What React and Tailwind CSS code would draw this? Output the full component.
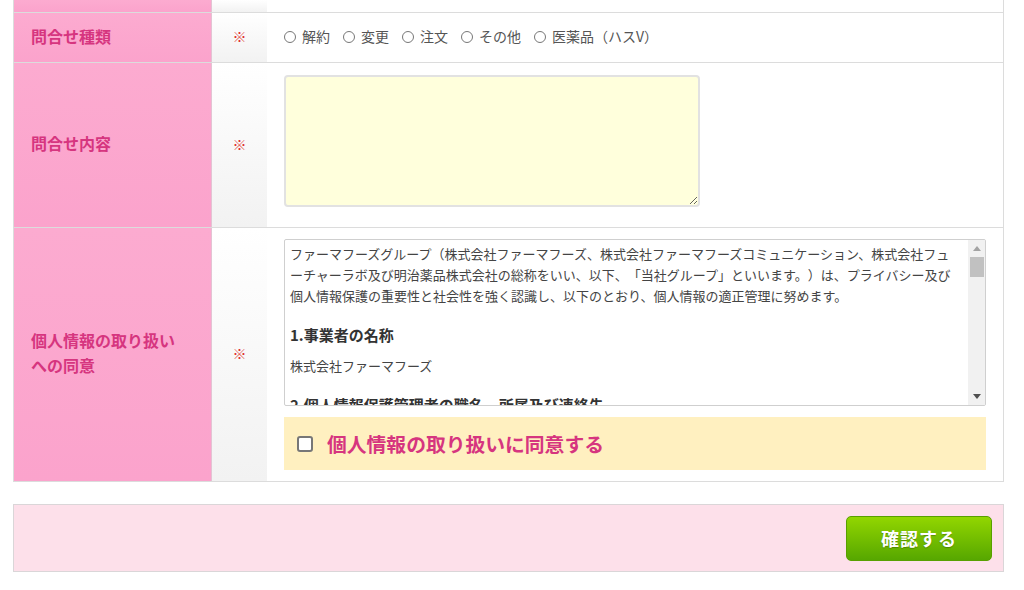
import React from 'react';

const font = { fontFamily: '"Noto Sans CJK JP", "Noto Sans", sans-serif' };

const kinds = ['解約', '変更', '注文', 'その他', '医薬品（ハスV）'];

const Row = ({ label, height, children, align = 'items-center' }) => (
  <div className={`flex border-b border-[#dcdcdc] ${height}`}>
    <div className="w-[198px] shrink-0 bg-gradient-to-b from-[#fcabd0] to-[#fba3cc] border-r border-[#e3c3d3] flex items-center pl-[17px] pb-[3px] text-[16px] font-bold text-[#d6357f] leading-[25px]">
      {label}
    </div>
    <div className="w-[55px] shrink-0 bg-gradient-to-b from-[#ffffff] to-[#f2f2f2] flex items-center justify-center pb-[2px] text-[14px] text-[#e0302f]">
      {label ? '※' : ''}
    </div>
    <div className={`flex-1 bg-white flex ${align} pl-[17px] pr-[17px]`}>{children}</div>
  </div>
);

const Radio = ({ text }) => (
  <label className="flex items-center gap-[6px] mr-[13px] text-[14px] text-[#555]">
    <span className="w-[12px] h-[12px] rounded-full border border-[#777] bg-white" />
    {text}
  </label>
);

// classic scrollbar with arrow buttons
const ScrollBar = () => (
  <div className="w-[17px] shrink-0 bg-[#f1f1f1] flex flex-col items-center">
    <div className="h-[17px] flex items-center justify-center">
      <svg width="8" height="5" viewBox="0 0 8 5"><path d="M4 0 L8 5 L0 5 Z" fill="#a3a3a3" /></svg>
    </div>
    <div className="w-[14px] h-[20px] bg-[#c1c1c1]" />
    <div className="flex-1" />
    <div className="h-[17px] flex items-center justify-center">
      <svg width="8" height="5" viewBox="0 0 8 5"><path d="M0 0 L8 0 L4 5 Z" fill="#505050" /></svg>
    </div>
  </div>
);

export default function App() {
  return (
    <div className="w-[1024px] h-[590px] bg-white overflow-hidden" style={font}>
      <div className="ml-[13px] w-[991px] border-l border-r border-[#dcdcdc]">
        <Row label="" height="h-[13px]" />
        <Row label="問合せ種類" height="h-[50px]">
          <div className="flex items-center -mt-[2px]">
            {kinds.map((k) => (
              <Radio key={k} text={k} />
            ))}
          </div>
        </Row>
        <Row label="問合せ内容" height="h-[165px]" align="items-start">
          <textarea
            className="mt-[12px] w-[416px] h-[132px] bg-[#ffffdc] border-2 border-[#e2e2e2] rounded-[4px] outline-none"
            defaultValue=""
          />
        </Row>
        <Row label={<span>個人情報の取り扱い<br />への同意</span>} height="h-[254px]">
          <div className="flex flex-col w-full">
            <div className="h-[167px] border border-[#cfcfcf] rounded-[2px] flex overflow-hidden">
              <div className="flex-1 overflow-hidden pl-[5px] pr-[10px] pt-[3px] text-[13px] text-[#444] leading-[21px] [text-spacing-trim:space-all]">
                <p>
                  ファーマフーズグループ（株式会社ファーマフーズ、株式会社ファーマフーズコミュニケーション、株式会社フューチャーラボ及び明治薬品株式会社の総称をいい、以下、「当社グループ」といいます。）は、プライバシー及び個人情報保護の重要性と社会性を強く認識し、以下のとおり、個人情報の適正管理に努めます。
                </p>
                <p className="mt-[18px] text-[15px] font-bold text-[#333]">1.事業者の名称</p>
                <p className="mt-[10px]">株式会社ファーマフーズ</p>
                <p className="mt-[18px] text-[15px] font-bold text-[#333]">2.個人情報保護管理者の職名、所属及び連絡先</p>
                <p className="mt-[10px]">個人情報保護管理者：管理部長</p>
              </div>
              <ScrollBar />
            </div>
            <div className="mt-[11px] h-[53px] bg-[#fff0c0] flex items-center pl-[13px] gap-[14px]">
              <span className="w-[16px] h-[16px] rounded-[3px] border-2 border-[#777] bg-white" />
              <span className="text-[19.8px] font-bold text-[#d6357f]">個人情報の取り扱いに同意する</span>
            </div>
          </div>
        </Row>
      </div>
      <div className="ml-[13px] mt-[22px] w-[991px] h-[68px] bg-[#fde0ea] border border-[#dad6d8] flex items-center justify-end pr-[11px]">
        <button className="w-[146px] h-[45px] rounded-[5px] border border-[#58a000] bg-gradient-to-b from-[#92d600] to-[#56a700] text-white text-[18px] font-bold tracking-[1px] [text-shadow:0_1px_1px_rgba(0,0,0,0.25)]">
          確認する
        </button>
      </div>
    </div>
  );
}
